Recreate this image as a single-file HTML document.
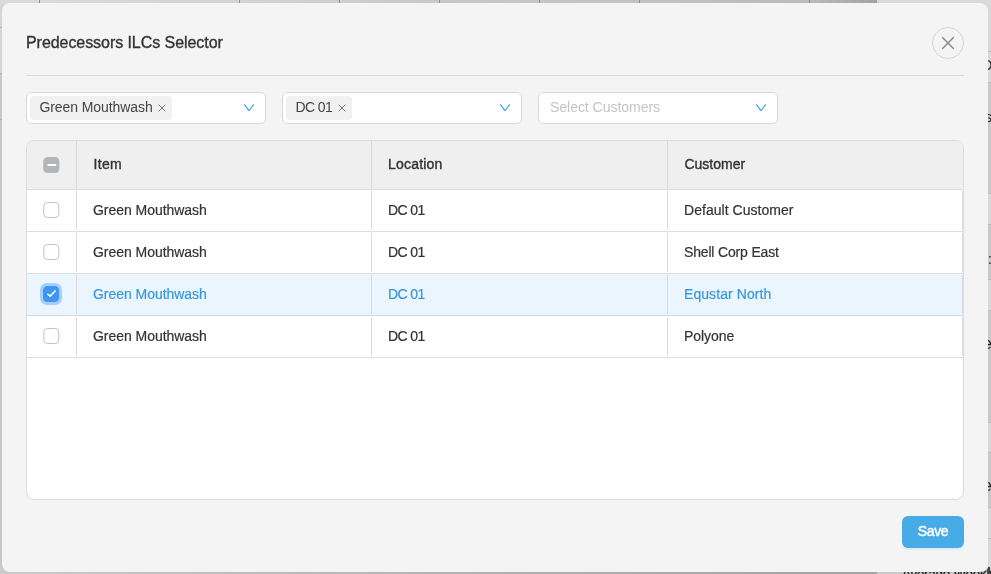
<!DOCTYPE html>
<html>
<head>
<meta charset="utf-8">
<title>Predecessors ILCs Selector</title>
<style>
*{box-sizing:border-box;margin:0;padding:0}
html,body{width:991px;height:574px;overflow:hidden}
body{font-family:"Liberation Sans",sans-serif;font-size:14px;color:#333;background:#d6d6d6;position:relative}
.abs{position:absolute}
#stage{position:absolute;left:0;top:0;width:991px;height:574px;overflow:hidden;will-change:transform}
/* background page remnants behind overlay */
.bg-top{left:0;top:0;width:991px;height:4px;background:linear-gradient(90deg,#dadada 0,#d3d3d3 240px,#c8c8c8 440px,#c2c2c2 640px,#bbbbbb 810px,#a2a2a2 877px,#d9d9d9 877px,#d9d9d9 991px)}
.vline{top:0;width:1px;height:4px;background:#8e8e8e}
.bg-right{left:986px;top:0;width:5px;height:574px;background:linear-gradient(180deg,#d9d9d9 0,#d9d9d9 82px,#c9c9c9 82px,#c9c9c9 193px,#d9d9d9 193px,#d9d9d9 224px,#c9c9c9 224px,#c9c9c9 279px,#d9d9d9 279px,#d9d9d9 310px,#c9c9c9 310px,#c9c9c9 422px,#d9d9d9 422px,#d9d9d9 452px,#c9c9c9 452px,#c9c9c9 507px,#d9d9d9 507px,#d9d9d9 100%)}
.hline{left:986px;width:5px;height:1px;background:#bcbcbc}
.mark{left:988px;width:2px;background:#555;border-radius:0 1px 1px 0;opacity:.55}
.bg-bottom{left:0;top:568px;width:991px;height:6px;background:linear-gradient(90deg,#cbcbcb 0,#c4c4c4 100px,#adadad 560px,#a4a4a4 877px,#c8c8c8 877px,#c8c8c8 991px)}
.frag{color:#222;font-size:14px;line-height:16px;white-space:nowrap}
/* modal */
.modal{left:2px;top:3px;width:986px;height:569px;background:#f4f4f4;border-radius:8px}
.title{left:26px;top:33px;font-size:16px;line-height:20px;color:#333;white-space:nowrap;-webkit-text-stroke:0.35px #333;letter-spacing:-0.06px}
.close{left:932px;top:27px;width:32px;height:32px;border:1px solid #d6d6d6;border-radius:50%;background:#f4f4f4}
.close svg{position:absolute;left:8px;top:8px}
.divider{left:26px;top:75px;width:938px;height:1px;background:#dadada}
.sel{top:92px;width:240px;height:32px;background:#fff;border:1px solid #d9d9d9;border-radius:5px}
.tag{position:absolute;left:3px;top:3px;height:24px;background:#f1f1f1;border-radius:4px;line-height:22px;font-size:14px;color:#444;white-space:nowrap;padding-left:9.4px;letter-spacing:-0.08px}
.tag svg{position:absolute;top:8px}
.ph{position:absolute;left:11px;top:-1px;line-height:30px;font-size:14px;color:#c4c4c4;white-space:nowrap;letter-spacing:-0.03px}
.chev{position:absolute;right:10px;top:10px}
/* table */
.table{left:26px;top:140px;width:938px;height:360px;background:#fff;border:1px solid #dcdcdc;border-radius:8px;overflow:hidden}
.thead{position:absolute;left:0;top:0;width:936px;height:49px;background:#efefef;border-bottom:1px solid #dcdcdc}
.row{position:absolute;left:0;width:936px;height:42px;border-bottom:1px solid #dedede;background:#fff}
.row.selrow{background:#eaf5fd;color:#3a97dc;border-bottom-color:#cfdbe4}
.cell{position:absolute;top:0;height:100%;white-space:nowrap}
.cell::after{content:"";position:absolute;right:0;top:0;bottom:0;width:1px;background:#dadada}
.row .cell::after{top:1px;bottom:1px}
.thead .c3::after{display:none}
.c0{left:0;width:50px}
.c1{left:50px;width:295px}
.c2{left:345px;width:296px}
.c3{left:641px;width:295px}
.row .c3{padding-left:16.3px}
.row .cell{line-height:41px;padding-left:16px;letter-spacing:-0.04px;-webkit-text-stroke:0.2px}
.thead .cell{line-height:47px;padding-left:16px;-webkit-text-stroke:0.38px #333;color:#333}
.cb{position:absolute;left:16px;transform:translateX(0.3px);width:16px;height:16px;border:1px solid #c4c4c4;border-radius:4px;background:#fff}
.row .cb{top:12px}
.thead .cb{top:16px;background:#b3b5b8;border-color:#b3b5b8}
.thead .cb i{position:absolute;left:2.5px;top:6px;width:9px;height:2px;background:#fff;border-radius:1px}
.cb.on{background:#3f95f2;border-color:#3f95f2;box-shadow:0 0 0 3px #a5cef9;transform:translateX(0)}
.cb.on svg{position:absolute;left:1px;top:1px}
.save{left:902px;top:516px;width:62px;height:32px;border-radius:6px;background:#47abe7;color:#fff;font-size:14px;line-height:30px;text-align:center;-webkit-text-stroke:0.45px #fff;letter-spacing:-0.35px;box-shadow:0 2px 0 rgba(5,145,255,0.08)}
</style>
</head>
<body>
<div id="stage">
<div class="abs bg-top"></div>
<div class="abs vline" style="left:39px"></div>
<div class="abs vline" style="left:239px"></div>
<div class="abs vline" style="left:339px"></div>
<div class="abs vline" style="left:439px"></div>
<div class="abs vline" style="left:539px"></div>
<div class="abs vline" style="left:639px"></div>
<div class="abs vline" style="left:809px"></div>
<div class="abs" style="left:0;top:4px;width:3px;height:570px;background:linear-gradient(#d5d5d5 0,#d5d5d5 69px,#c8c8c8 69px,#c8c8c8 100%)"></div>
<div class="abs" style="left:0;top:27px;width:3px;height:1px;background:#b2b2b2"></div>
<div class="abs" style="left:0;top:73px;width:3px;height:1px;background:#b2b2b2"></div>
<div class="abs" style="left:0;top:119px;width:3px;height:1px;background:#b2b2b2"></div>
<div class="abs bg-right"></div>
<div class="abs hline" style="top:51px"></div>
<div class="abs hline" style="top:82px"></div>
<div class="abs hline" style="top:193px"></div>
<div class="abs hline" style="top:224px"></div>
<div class="abs hline" style="top:279px"></div>
<div class="abs hline" style="top:310px"></div>
<div class="abs hline" style="top:422px"></div>
<div class="abs hline" style="top:452px"></div>
<div class="abs hline" style="top:507px"></div>
<div class="abs hline" style="top:538px"></div>
<div class="abs frag" style="right:-1.5px;top:57px;font-size:15px">D</div>
<div class="abs frag" style="right:-1px;top:109px;font-size:14px">s</div>
<div class="abs frag" style="right:-1px;top:251px;font-size:14px">:</div>
<div class="abs frag" style="right:-1px;top:336px;font-size:16px">e</div>
<div class="abs frag" style="right:-1px;top:478px;font-size:16px">e</div>
<div class="abs bg-bottom"></div>
<div class="abs frag" style="left:902px;top:566px;font-size:13.5px;letter-spacing:-0.3px;-webkit-text-stroke:0.3px #222">Average Weekly Demand</div>

<div class="abs" style="left:988px;top:567px;width:2px;height:7px;background:#444"></div>
<div class="abs modal"></div>
<div class="abs title">Predecessors ILCs Selector</div>
<div class="abs close"><svg width="14" height="14" viewBox="0 0 14 14"><path d="M1.3 1.3 L12.7 12.7 M12.7 1.3 L1.3 12.7" stroke="#8a8a8a" stroke-width="1.5" fill="none" stroke-linecap="butt"/></svg></div>
<div class="abs divider"></div>

<div class="abs sel" style="left:26px">
  <div class="tag" style="width:142px">Green Mouthwash<svg style="left:128.3px;top:7.5px" width="8" height="8" viewBox="0 0 8 8"><path d="M0.7 0.7 L7.3 7.3 M7.3 0.7 L0.7 7.3" stroke="#777" stroke-width="1" fill="none"/></svg></div>
  <svg class="chev" width="12" height="10" viewBox="0 0 12 10"><path d="M1.3 1.4 L6 7.5 L10.7 1.4" stroke="#3d9de3" stroke-width="1.15" fill="none" stroke-linejoin="miter"/></svg>
</div>
<div class="abs sel" style="left:282px">
  <div class="tag" style="width:66px"><span style="letter-spacing:-0.6px">DC 01</span><svg style="left:52.3px;top:7.5px" width="8" height="8" viewBox="0 0 8 8"><path d="M0.7 0.7 L7.3 7.3 M7.3 0.7 L0.7 7.3" stroke="#777" stroke-width="1" fill="none"/></svg></div>
  <svg class="chev" width="12" height="10" viewBox="0 0 12 10"><path d="M1.3 1.4 L6 7.5 L10.7 1.4" stroke="#3d9de3" stroke-width="1.15" fill="none" stroke-linejoin="miter"/></svg>
</div>
<div class="abs sel" style="left:538px">
  <div class="ph">Select Customers</div>
  <svg class="chev" width="12" height="10" viewBox="0 0 12 10"><path d="M1.3 1.4 L6 7.5 L10.7 1.4" stroke="#3d9de3" stroke-width="1.15" fill="none" stroke-linejoin="miter"/></svg>
</div>

<div class="abs table">
  <div class="thead">
    <div class="cell c0"><span class="cb"><i></i></span></div>
    <div class="cell c1" style="letter-spacing:0.3px;padding-left:16.5px">Item</div>
    <div class="cell c2" style="letter-spacing:0.2px">Location</div>
    <div class="cell c3" style="padding-left:16.4px">Customer</div>
  </div>
  <div class="row" style="top:49px">
    <div class="cell c0"><span class="cb"></span></div>
    <div class="cell c1">Green Mouthwash</div>
    <div class="cell c2" style="letter-spacing:-0.6px">DC 01</div>
    <div class="cell c3" style="letter-spacing:0.03px">Default Customer</div>
  </div>
  <div class="row" style="top:91px">
    <div class="cell c0"><span class="cb"></span></div>
    <div class="cell c1">Green Mouthwash</div>
    <div class="cell c2" style="letter-spacing:-0.6px">DC 01</div>
    <div class="cell c3" style="letter-spacing:-0.17px">Shell Corp East</div>
  </div>
  <div class="row selrow" style="top:133px">
    <div class="cell c0"><span class="cb on"><svg width="12" height="12" viewBox="0 0 12 12"><path d="M2.4 5.7 L5.1 8.1 L10.6 2.4" stroke="#fff" stroke-width="1.5" fill="none" stroke-linecap="butt" stroke-linejoin="miter"/></svg></span></div>
    <div class="cell c1">Green Mouthwash</div>
    <div class="cell c2" style="letter-spacing:-0.6px">DC 01</div>
    <div class="cell c3" style="letter-spacing:0.07px">Equstar North</div>
  </div>
  <div class="row" style="top:175px">
    <div class="cell c0"><span class="cb"></span></div>
    <div class="cell c1">Green Mouthwash</div>
    <div class="cell c2" style="letter-spacing:-0.6px">DC 01</div>
    <div class="cell c3" style="letter-spacing:-0.07px">Polyone</div>
  </div>
</div>

<div class="abs save">Save</div>
</div>
</body>
</html>
